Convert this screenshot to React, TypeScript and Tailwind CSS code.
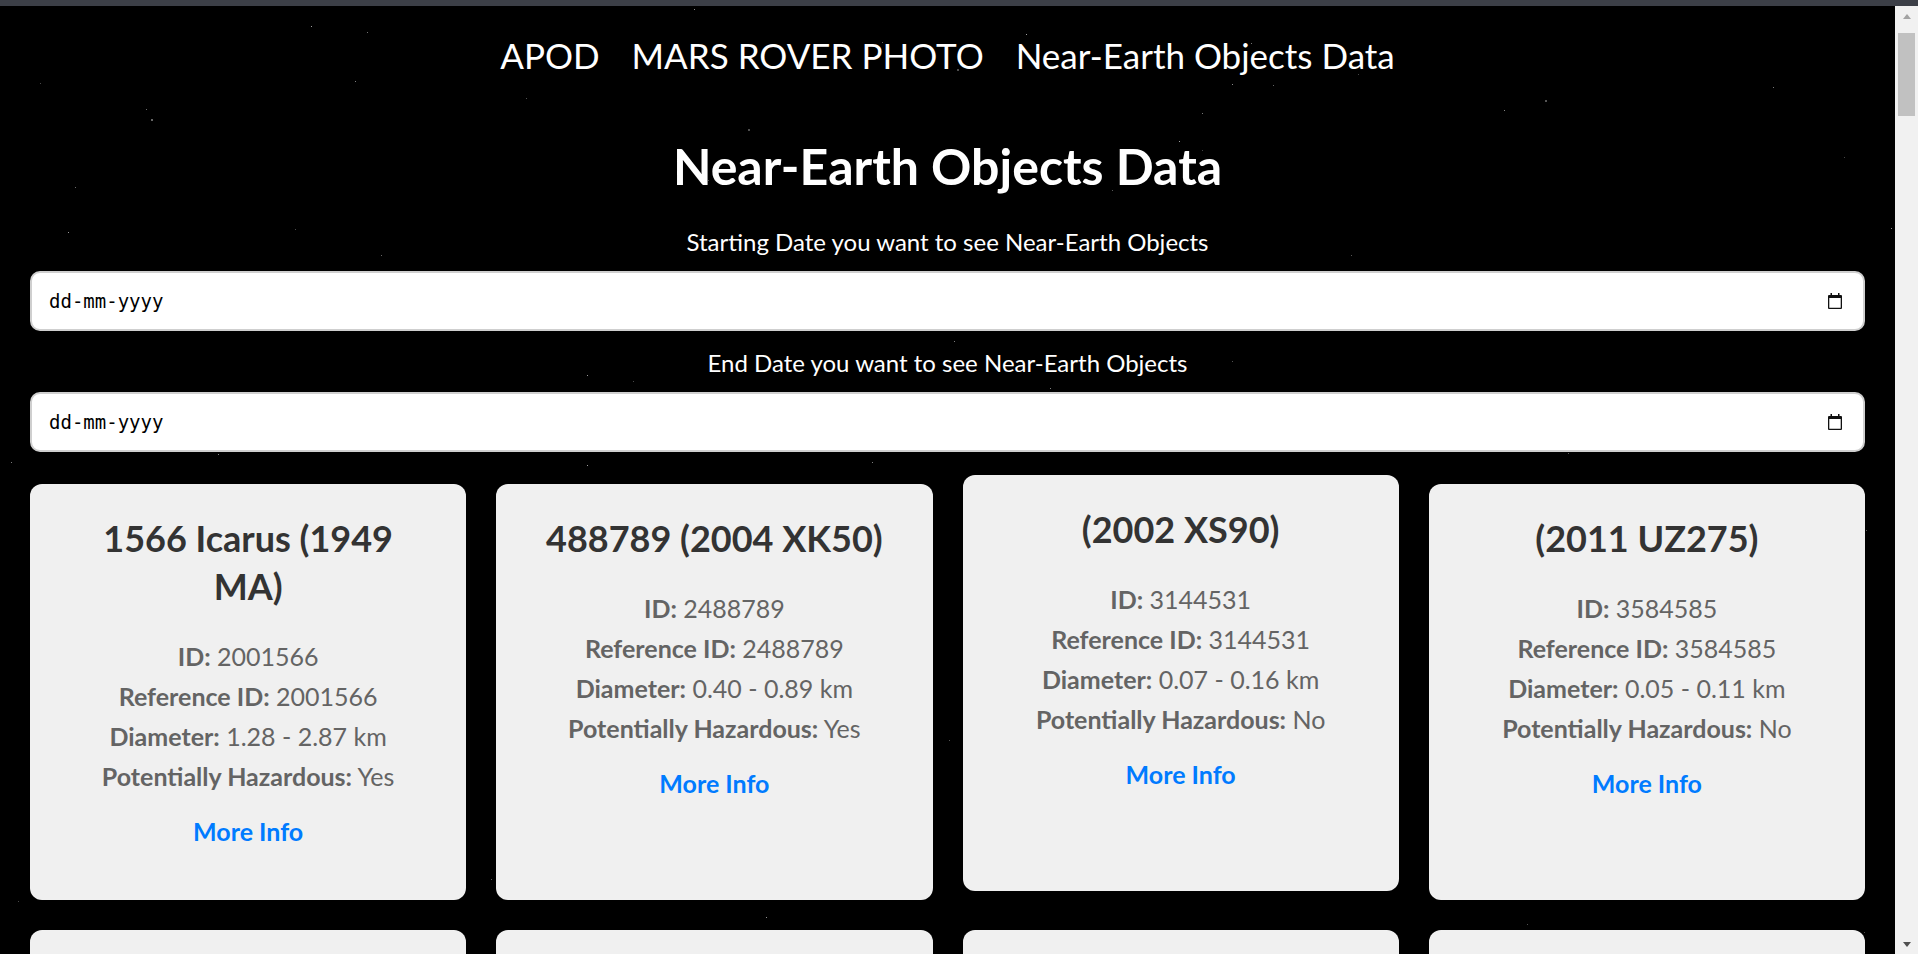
import { useMemo } from "react";

// near-earth objects shown in the grid
const asteroids = [
  { name: "1566 Icarus (1949 MA)", id: "2001566", min: "1.28", max: "2.87", hazardous: true },
  { name: "488789 (2004 XK50)", id: "2488789", min: "0.40", max: "0.89", hazardous: true },
  { name: "(2002 XS90)", id: "3144531", min: "0.07", max: "0.16", hazardous: false },
  { name: "(2011 UZ275)", id: "3584585", min: "0.05", max: "0.11", hazardous: false },
  { name: "(2015 XG351)", id: "3734231", min: "0.02", max: "0.05", hazardous: false },
  { name: "(2017 YR1)", id: "3797541", min: "0.04", max: "0.09", hazardous: false },
  { name: "(2019 AN5)", id: "54007223", min: "0.01", max: "0.03", hazardous: false },
  { name: "(2020 BZ12)", id: "54016374", min: "0.03", max: "0.07", hazardous: false },
];

// small seeded random so the star field stays the same every render
function seeded(seed: number) {
  let a = seed;
  return () => {
    a |= 0;
    a = (a + 0x6d2b79f5) | 0;
    let t = Math.imul(a ^ (a >>> 15), 1 | a);
    t = (t + Math.imul(t ^ (t >>> 7), 61 | t)) ^ t;
    return ((t ^ (t >>> 14)) >>> 0) / 4294967296;
  };
}

function Stars() {
  const stars = useMemo(() => {
    const rand = seeded(1949);
    return Array.from({ length: 120 }, () => ({
      x: rand() * 100,
      y: rand() * 100,
      size: rand() < 0.8 ? 1 : 2,
      opacity: 0.35 + rand() * 0.5,
    }));
  }, []);

  return (
    <div className="absolute inset-0 pointer-events-none">
      {stars.map((s, i) => (
        <span
          key={i}
          className="absolute bg-white rounded-full"
          style={{ left: `${s.x}%`, top: `${s.y}%`, width: s.size, height: s.size, opacity: s.opacity }}
        />
      ))}
    </div>
  );
}

function CalendarIcon() {
  return (
    <svg width="14" height="16" viewBox="0 0 14 16" aria-hidden="true">
      <rect x="2.5" y="0" width="1.5" height="2.5" fill="#111" />
      <rect x="10" y="0" width="1.5" height="2.5" fill="#111" />
      <path
        fillRule="evenodd"
        fill="#111"
        d="M1 2h12a1 1 0 0 1 1 1v12a1 1 0 0 1-1 1H1a1 1 0 0 1-1-1V3a1 1 0 0 1 1-1zM1.3 5v9.7h11.4V5z"
      />
    </svg>
  );
}

function DateField({ label, first }: { label: string; first?: boolean }) {
  return (
    <div className={first ? "mt-[28px]" : "mt-[16px]"}>
      <p className="text-center text-[24px] leading-[32px] text-white">{label}</p>
      <div className="mt-[13px] h-[60px] flex items-center justify-between bg-white border-2 border-[#cfcfcf] rounded-[10px] pl-[17px] pr-[21px]">
        <span className="font-['DejaVu_Sans_Mono',monospace] text-[19px] text-black">dd-mm-yyyy</span>
        <CalendarIcon />
      </div>
    </div>
  );
}

function AsteroidCard({ item, raised }: { item: (typeof asteroids)[number]; raised?: boolean }) {
  return (
    <div
      className={`bg-[#f0f0f0] rounded-[12px] px-[30px] pt-[30px] pb-[49px] flex flex-col items-center text-center ${
        raised ? "-translate-y-[9px]" : ""
      }`}
    >
      <h2 className="max-w-[352px] text-[36px] leading-[48px] font-bold text-[#333]">{item.name}</h2>
      <div className="mt-[26px] text-[25px] leading-[40px] text-[#646464]">
        <p>
          <span className="font-bold">ID:</span> {item.id}
        </p>
        <p>
          <span className="font-bold">Reference ID:</span> {item.id}
        </p>
        <p>
          <span className="font-bold">Diameter:</span> {item.min} - {item.max} km
        </p>
        <p>
          <span className="font-bold">Potentially Hazardous:</span> {item.hazardous ? "Yes" : "No"}
        </p>
      </div>
      <a href="#" className="mt-[15px] text-[25px] leading-[40px] font-bold text-[#007bff]">
        More Info
      </a>
    </div>
  );
}

function Scrollbar() {
  return (
    <div className="w-[23px] shrink-0 bg-[#f1f1f1] flex flex-col items-center">
      <div className="h-[20px] flex items-center justify-center">
        <div className="w-0 h-0 border-l-[4px] border-r-[4px] border-b-[5px] border-l-transparent border-r-transparent border-b-[#a3a3a3]" />
      </div>
      <div className="flex-1 w-full px-[3px]">
        <div className="mt-[7px] h-[83px] bg-[#c1c1c1]" />
      </div>
      <div className="h-[20px] flex items-center justify-center">
        <div className="w-0 h-0 border-l-[4px] border-r-[4px] border-t-[5px] border-l-transparent border-r-transparent border-t-[#505050]" />
      </div>
    </div>
  );
}

export default function App() {
  return (
    <div className="h-screen w-full overflow-hidden flex flex-col bg-black font-['Lato',sans-serif]">
      <div className="h-[6px] shrink-0 bg-[#3c3f47]" />
      <div className="flex flex-1 min-h-0">
        <main className="relative flex-1 min-w-0 overflow-hidden">
          <Stars />
          <div className="relative px-[30px]">
            <nav className="pt-[25px] flex justify-center gap-[32px] text-[35px] leading-[48px] text-white">
              <a href="#">APOD</a>
              <a href="#">MARS ROVER PHOTO</a>
              <a href="#">Near-Earth Objects Data</a>
            </nav>

            <h1 className="mt-[55px] text-center text-[50px] leading-[64px] font-bold text-white">
              Near-Earth Objects Data
            </h1>

            <DateField label="Starting Date you want to see Near-Earth Objects" first />
            <DateField label="End Date you want to see Near-Earth Objects" />

            <div className="mt-[32px] grid grid-cols-4 gap-[30px]">
              {asteroids.map((a, i) => (
                <AsteroidCard key={a.id} item={a} raised={i === 2} />
              ))}
            </div>
          </div>
        </main>
        <Scrollbar />
      </div>
    </div>
  );
}
